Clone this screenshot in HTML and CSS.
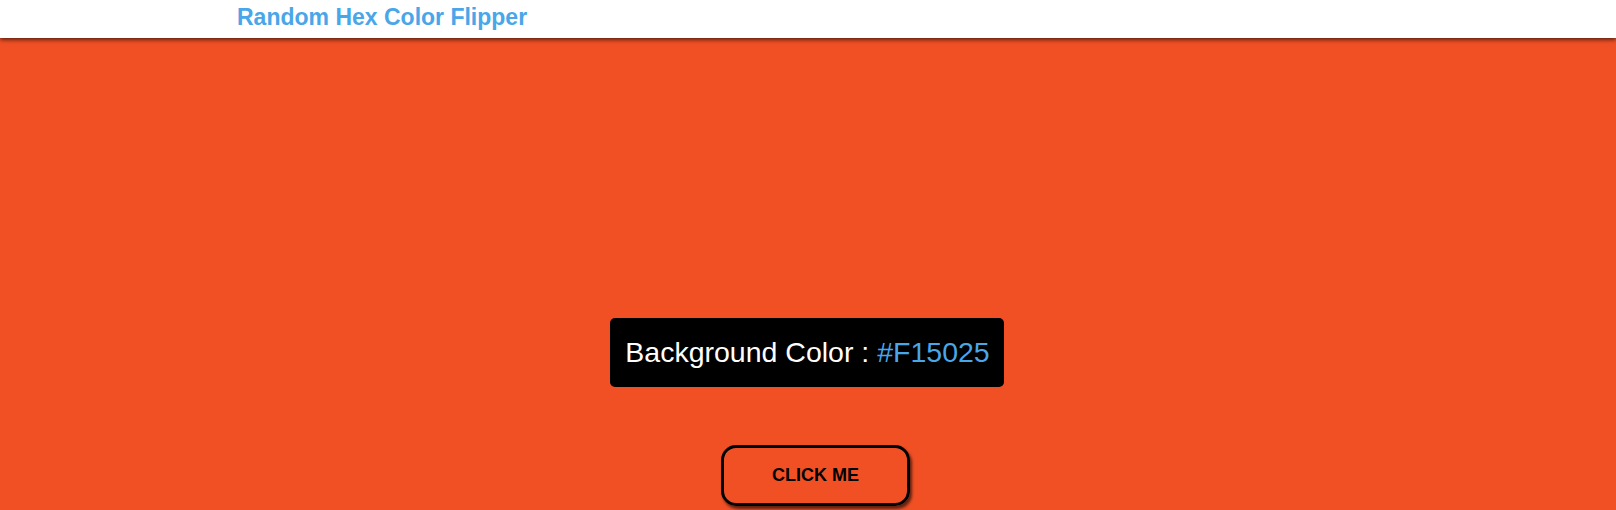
FILE: index.html
```html
<!DOCTYPE html>
<html lang="en">
<head>
<meta charset="utf-8">
<title>Color Flipper</title>
<link rel="stylesheet" href="styles.css">
</head>
<body>
<nav class="nav">
  <h4 class="nav-title">Random Hex Color Flipper</h4>
</nav>
<main class="main">
  <h2 class="color-box">Background Color : <span class="color-value">#F15025</span></h2>
  <button class="btn" type="button">Click Me</button>
</main>
</body>
</html>
```
FILE: styles.css
```css
* { box-sizing: border-box; }
html, body { margin: 0; padding: 0; height: 100%; overflow: hidden; }
body {
  font-family: "Liberation Sans", Arial, sans-serif;
  background: #f15025;
}
.nav {
  position: relative;
  z-index: 1;
  height: 38px;
  background: #ffffff;
  padding: 4px 0 0 237px;
  box-shadow: 0 2px 4px rgba(0, 0, 0, 0.6);
}
.nav-title {
  margin: 0;
  font-size: 23px;
  line-height: 26px;
  font-weight: 700;
  color: #49a6e9;
}
.main {
  display: flex;
  flex-direction: column;
  align-items: center;
  padding-top: 280px;
}
.color-box {
  margin: 0 0 0 -2px;
  background: #000000;
  color: #ffffff;
  font-weight: 400;
  font-size: 28.5px;
  line-height: normal;
  padding: 18px 14px 18px 15px;
  border-radius: 5px;
}
.color-value { color: #49a6e9; }
.btn {
  margin: 58px 0 0 15px;
  width: 189px;
  height: 61px;
  background: transparent;
  border: 3px solid #000000;
  border-radius: 15px;
  box-shadow: 2px 3px 3px rgba(0, 0, 0, 0.6);
  font-family: "Liberation Sans", Arial, sans-serif;
  font-weight: 700;
  font-size: 18px;
  text-transform: uppercase;
  color: #000000;
  padding: 0;
}
```
